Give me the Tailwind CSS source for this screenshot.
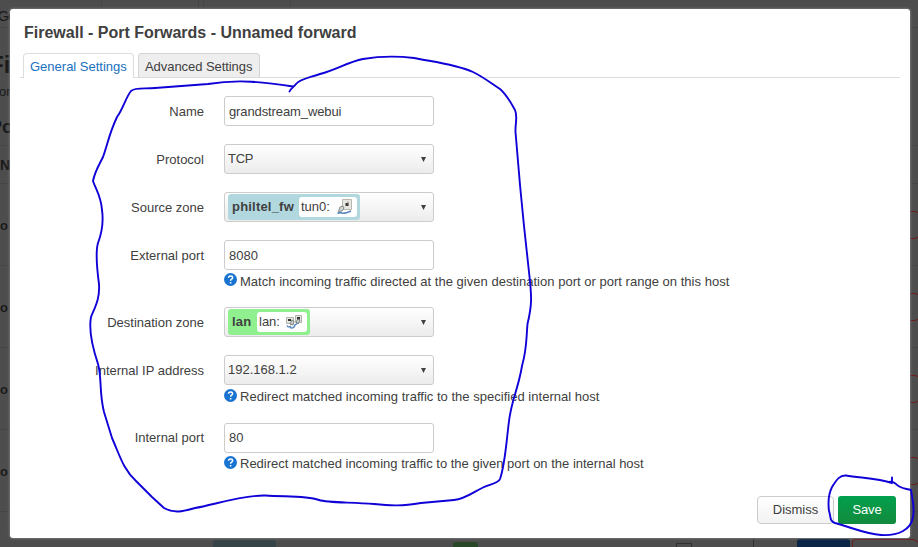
<!DOCTYPE html>
<html lang="en">
<head>
<meta charset="utf-8">
<title>Firewall - Port Forwards</title>
<script src="https://cdn.jsdelivr.net/npm/@tailwindcss/browser@4"></script>
</head>
<body class="relative h-[547px] w-[918px] overflow-hidden bg-[#4d4d4d] font-['Liberation_Sans',Arial,sans-serif] text-[13px] leading-[18px] text-[#404040]">

<!-- dimmed page behind the dialog -->
<svg class="absolute inset-0" width="918" height="547" viewBox="0 0 918 547" fill="none">
  <g fill="#1a1a1a" font-family="Liberation Sans, Arial, sans-serif">
    <text x="-2" y="21" font-size="14" letter-spacing="-1">Ge</text>
    <text x="-11" y="73" font-size="24" font-weight="bold">Fi</text>
    <text x="-1" y="96" font-size="13">or</text>
    <text x="-10" y="133" font-size="18" font-weight="bold">Po</text>
    <text x="0" y="170" font-size="14" font-weight="bold">N</text>
    <text x="0" y="230" font-size="13" font-weight="bold">o</text>
    <text x="0" y="312" font-size="13" font-weight="bold">o</text>
    <text x="0" y="394" font-size="13" font-weight="bold">o</text>
    <text x="0" y="476" font-size="13" font-weight="bold">o</text>
  </g>
  <path d="M0 27.5H918M0 145.500H918M0 183.500H918M0 265.500H918M0 347.500H918M0 429.500H918M0 511.500H918M101.500 0V8M198.500 0V8M203.500 0V8M290.500 0V8" stroke="#464646"/>
  <path d="M905 211.500H915Q918 211.500 920 215M905 238.500H915Q918 238.500 920 234M905 293.500H915Q918 293.500 920 297M905 320.500H915Q918 320.500 920 316M905 375.500H915Q918 375.500 920 379M905 402.500H915Q918 402.500 920 398M905 457.500H915Q918 457.500 920 461M905 484.500H915Q918 484.500 920 480M852.500 550V542Q852.500 539.500 855 539.500H913Q917 539.500 918 543" stroke="#6b1c1c"/>
  <rect x="213" y="540" width="63" height="20" rx="3" fill="#364447"/>
  <rect x="453" y="542" width="25" height="20" rx="3" fill="#284828"/>
  <path d="M676.500 550V543.500H691.500V550M753.500 539V547" stroke="#303030"/>
  <rect x="797" y="539" width="53" height="20" rx="3" fill="#0b2546"/>
</svg>

<main class="relative ml-[10px] mt-[8.500px] flex h-[529.500px] w-[900px] flex-col rounded-[3px] bg-white px-[10px] shadow-[0_0_3px_#999]">
  <h1 class="ml-[4px] mt-[14px] h-[20px] whitespace-nowrap text-[16px] font-bold leading-[20px]">Firewall - Port Forwards - Unnamed forward</h1>
  <nav class="mt-[10px] flex h-[25px] border-b border-[#dcdcdc] pl-[3px]">
    <a class="mr-[4px] h-[25px] w-[111px] shrink-0 whitespace-nowrap rounded-t border border-b-0 border-[#ddd] bg-white pl-[6px] leading-[26px] text-[#2070c0]">General Settings</a>
    <a class="h-[24px] w-[122px] shrink-0 whitespace-nowrap rounded-t border border-b-0 border-[#d4d4d4] bg-[#eee] pl-[6px] leading-[26px] tracking-[-0.06px]">Advanced Settings</a>
  </nav>
  <form class="mt-[18px] flex flex-col text-[13px]">
    <div class="flex h-[48px]"><label class="mr-[20px] w-[184px] text-right leading-[32px]">Name</label>
      <div class="h-[30px] w-[210px] rounded-[3px] border border-[#ccc] pl-[4px] leading-[30px] tracking-[-0.11px]">grandstream_webui</div></div>
    <div class="flex h-[48px]"><label class="mr-[20px] w-[184px] text-right leading-[32px]">Protocol</label>
      <div class="flex h-[30px] w-[210px] items-center justify-between rounded-[3px] border border-[#ccc] bg-linear-to-b from-white to-[#ececec] pl-[3px] pr-[7px]"><span class="pt-px tracking-[-0.3px]">TCP</span><svg class="mt-[2px]" width="5" height="5"><path d="M0 0H5L2.500 5Z" fill="#404040"/></svg></div></div>
    <div class="flex h-[48px]"><label class="mr-[20px] w-[184px] text-right leading-[32px]">Source zone</label>
      <div class="flex h-[30px] w-[210px] items-center justify-between rounded-[3px] border border-[#ccc] bg-linear-to-b from-white to-[#ececec] pl-[3px] pr-[7px]">
        <div class="flex h-[26px] w-[132px] items-center rounded-[3px] bg-[#b1d8df] pl-[4px]"><b class="w-[67px] whitespace-nowrap tracking-[0.2px]">philtel_fw</b>
          <span class="flex h-[20px] w-[58px] items-center rounded-[3px] bg-white pl-[2px]">tun0:<svg class="ml-[7px]" width="16" height="16" viewBox="0 0 16 16" fill="none"><path d="M5.500.5H14.500V10.500H5.500Z" fill="#e8e8e2" stroke="#b8b8b0"/><path d="M8.500 4H11.500V7H8.500Z" fill="#333"/><path d="M11 2.500V6" stroke="#8a7568"/><path d="M1.500 12.500L3 8L6 7L7 9L5 12Z" fill="#d4d6d2" stroke="#858b8b"/><path d="M.5 14.500Q3 13 5 14T14 12" stroke="#5888bd" stroke-width="1.700"/></svg></span>
        </div><svg class="mt-[2px]" width="5" height="5"><path d="M0 0H5L2.500 5Z" fill="#404040"/></svg></div></div>
    <div class="flex h-[67px]"><label class="mr-[20px] w-[184px] text-right leading-[32px]">External port</label>
      <div class="w-[600px]"><div class="h-[30px] w-[210px] rounded-[3px] border border-[#ccc] pl-[4px] leading-[30px]">8080</div>
      <p class="mt-[3px] flex items-start"><svg class="mr-[3px]" width="13" height="13" viewBox="0 0 13 13"><circle cx="6.500" cy="6.500" r="6.500" fill="#1873d1"/><path d="M4.500 4.800Q4.600 3 6.600 3T8.600 4.700Q8.600 5.500 7.500 6.200Q6.600 6.800 6.600 7.700M6.600 9V10.500" fill="none" stroke="#fff" stroke-width="1.500"/></svg><span class="whitespace-nowrap tracking-[0.02px]">Match incoming traffic directed at the given destination port or port range on this host</span></p></div></div>
    <div class="flex h-[48px]"><label class="mr-[20px] w-[184px] text-right leading-[32px]">Destination zone</label>
      <div class="flex h-[30px] w-[210px] items-center justify-between rounded-[3px] border border-[#ccc] bg-linear-to-b from-white to-[#ececec] pl-[3px] pr-[7px]">
        <div class="flex h-[26px] w-[82px] items-center rounded-[3px] bg-[#90f090] pl-[4px]"><b class="w-[25px] tracking-[0.2px]">lan</b>
          <span class="flex h-[20px] w-[50px] items-center rounded-[3px] bg-white pl-[2px]">lan:<svg class="ml-[6px]" width="16" height="16" viewBox="0 0 16 16" fill="none"><path d="M.5 3.500H7.500V9.500H.5ZM9.500 1.500H15.500V8.500H9.500Z" fill="#e5e5df" stroke="#b2b2aa"/><path d="M2 5H5V7H2ZM11 3H14V6H11Z" fill="#333"/><path d="M4 10L6 6L8 7L7 11ZM10 8L12 5L14 6L12 10Z" fill="#d4d6d2" stroke="#777f80"/><path d="M1 11.500Q2 14 5 12M4 13.500Q8 15 9 11L12 9" stroke="#5888bd" stroke-width="1.500"/></svg></span>
        </div><svg class="mt-[2px]" width="5" height="5"><path d="M0 0H5L2.500 5Z" fill="#404040"/></svg></div></div>
    <div class="flex h-[68px]"><label class="mr-[20px] w-[184px] text-right leading-[32px]">Internal IP address</label>
      <div class="w-[600px]"><div class="flex h-[30px] w-[210px] items-center justify-between rounded-[3px] border border-[#ccc] bg-linear-to-b from-white to-[#ececec] pl-[3px] pr-[7px]"><span class="pt-px">192.168.1.2</span><svg class="mt-[2px]" width="5" height="5"><path d="M0 0H5L2.500 5Z" fill="#404040"/></svg></div>
      <p class="mt-[3px] flex items-start"><svg class="mr-[3px] mt-px" width="13" height="13" viewBox="0 0 13 13"><circle cx="6.500" cy="6.500" r="6.500" fill="#1873d1"/><path d="M4.500 4.800Q4.600 3 6.600 3T8.600 4.700Q8.600 5.500 7.500 6.200Q6.600 6.800 6.600 7.700M6.600 9V10.500" fill="none" stroke="#fff" stroke-width="1.500"/></svg><span class="whitespace-nowrap tracking-[0.02px]">Redirect matched incoming traffic to the specified internal host</span></p></div></div>
    <div class="flex h-[52px]"><label class="mr-[20px] w-[184px] text-right leading-[30px]">Internal port</label>
      <div class="w-[600px]"><div class="h-[30px] w-[210px] rounded-[3px] border border-[#ccc] pl-[4px] leading-[28px]">80</div>
      <p class="mt-[3px] flex items-start"><svg class="mr-[3px]" width="13" height="13" viewBox="0 0 13 13"><circle cx="6.500" cy="6.500" r="6.500" fill="#1873d1"/><path d="M4.500 4.800Q4.600 3 6.600 3T8.600 4.700Q8.600 5.500 7.500 6.200Q6.600 6.800 6.600 7.700M6.600 9V10.500" fill="none" stroke="#fff" stroke-width="1.500"/></svg><span class="-mt-px whitespace-nowrap">Redirect matched incoming traffic to the given port on the internal host</span></p></div></div>
  </form>
  <footer class="mt-auto mb-[14px] flex justify-end gap-[4px] pr-[4px]">
    <button class="h-[28px] w-[77px] rounded-[4px] border border-[#ccc] bg-linear-to-b from-white to-[#f2f2f2]">Dismiss</button>
    <button class="h-[28px] w-[58px] rounded-[3px] bg-linear-to-b from-[#00a04e] to-[#128a3c] tracking-[-0.2px] text-white">Save</button>
  </footer>
</main>

<!-- freehand pen annotations -->
<svg class="absolute inset-0" width="918" height="547" viewBox="0 0 918 547" fill="none" stroke="#1000d8" stroke-width="1.900" stroke-linecap="round" stroke-linejoin="round">
  <path d="M289.500 91.500C291 88 294 87 296 84C300 79 308 78 320 74C338 69 348 62 363 59C381 56 397 56 414 58C434 62 455 64 473 72C485 78 492 84 500 89C507 95 511 103 515 110C518 117 515 124 515.500 132L520 185L524 226L529 272C532 298 532 305 527.500 324C526 341 527 348 522 366C518 390 512 398 509 421C506 445 505 465 500 479C498 484 489 484 482 488C472 493 465 499 454 500L421 503C402 506 392 506 374 504C350 502 328 503 319 500C305 495 286 497 265 495.500C243 495 213 505 195 508C184 511 175 514 164 508L152 497L136 481C123 469 120 456 112 438L104 412C99 392 102 378 98 364C94 352 88 333 91 317C95 307 100 299 99 284C97 269 95 253 98 243C101 235 104 224 102 210C101 196 96 190 93 181C95 171 99 165 103 157C108 143 109 134 117 117C123 109 126 97 131 91C135 87 145 89 155 88L208 84C238 79 265 82 293 86.500"/>
  <path d="M892 477.500V483M892 483C878 478 861 478 846 475.500C839 475 836 481 832 487C829 493 828 503 829 511C831 516 829 521 835 523C850 527 866 534 881 535C898 536 911 530 913 517C915 506 912 498 911 490C903 488 899 488 896 484Q893 481 889 482"/>
</svg>
</body>
</html>
